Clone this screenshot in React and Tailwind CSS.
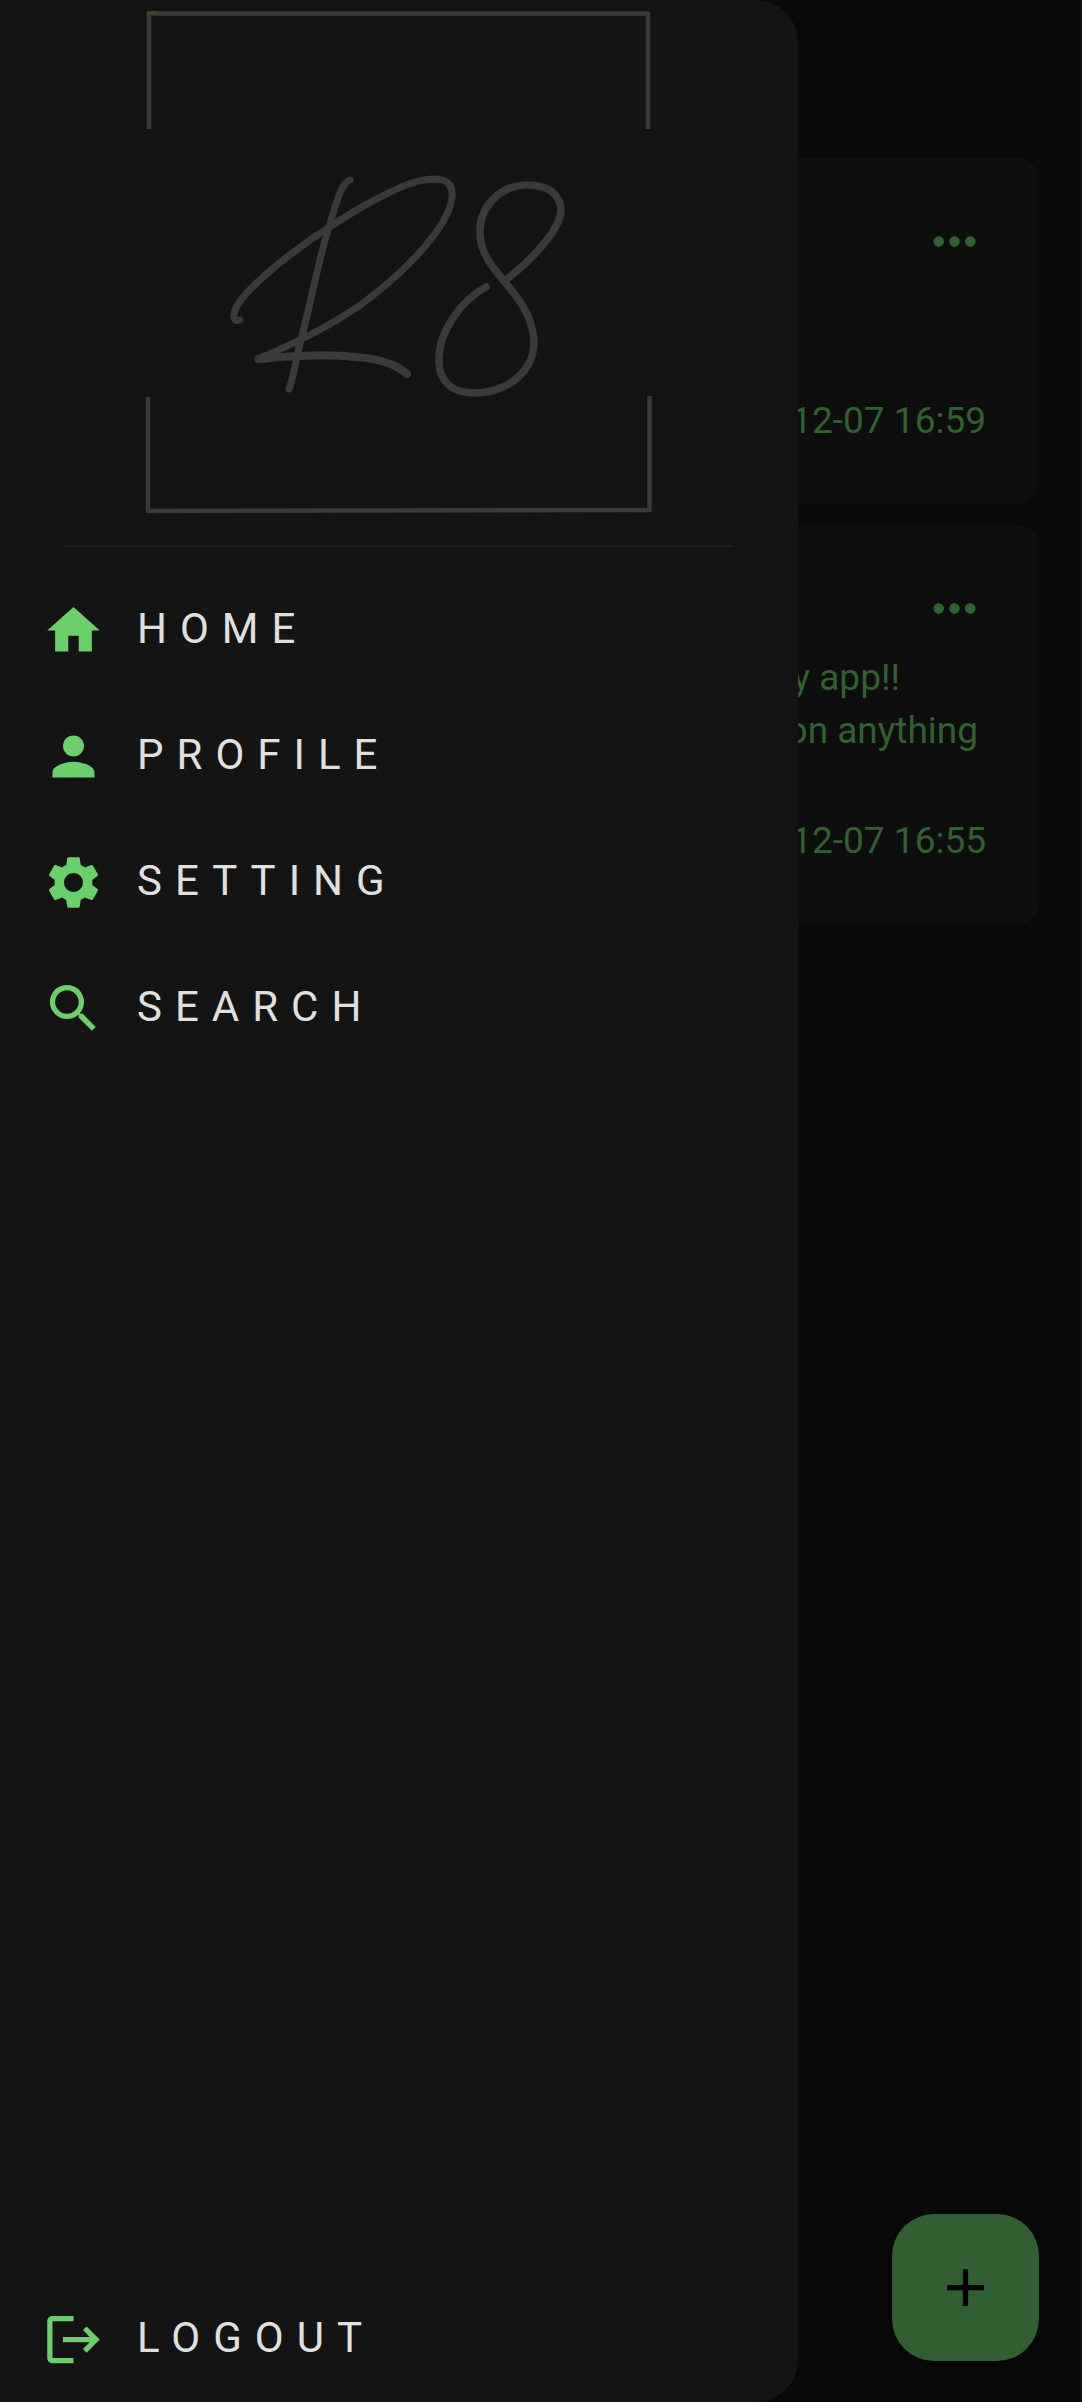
import React from "react";
import { MdHome, MdPerson, MdSettings, MdSearch, MdMoreHoriz, MdAdd } from "react-icons/md";

function LogoutIcon({ className }) {
  return (
    <svg viewBox="0 0 24 24" fill="currentColor" className={className} aria-hidden="true">
      <path d="M17 7l-1.41 1.41L18.17 11H8v2h10.17l-2.58 2.58L17 17l5-5zM4 5h8V3H4c-1.1 0-2 .9-2 2v14c0 1.1.9 2 2 2h8v-2H4V5z" />
    </svg>
  );
}

function Logo() {
  return (
    <svg
      viewBox="126 0 546 545"
      className="mx-auto w-[546px] h-[545px] shrink-0"
      fill="none"
      stroke="#3c3a39"
      strokeLinecap="round"
      strokeLinejoin="round"
      role="img"
      aria-label="Signature logo"
    >
      <g strokeWidth="4.5" strokeLinecap="butt">
        <path d="M149 129V13.5H648V129" />
        <path d="M148 397V511L649.5 510V396" />
      </g>
      <path d="M148 13L156 12.5" stroke="#4a4322" strokeWidth="3" />
      <path
        strokeWidth="7"
        d="M350 180C340 183 334 212 328 230C318 262 309 312 299 347C296 362 293 378 289 389"
      />
      <path
        strokeWidth="7"
        d="M240 320C234 322 232 317 236 308C242 296 255 284 271 270C290 254 308 241 328 228C344 218 357 209 371 202C388 193 399 187 412 183C420 180 428 179 437 179C448 180 453 186 452 197C450 222 416 262 371 297C341 321 300 341 258 359"
      />
      <path
        strokeWidth="8"
        d="M259 359C275 358 285 356 300 356C319 355 337 355 354 357C375 358 395 363 407 374"
      />
      <path
        strokeWidth="7.5"
        d="M486 287C463 299 439 330 439 359C438 380 451 393 474 393C487 393 500 389 509 384C526 373 534 360 534 341C533 313 514 293 495 270C487 260 480 248 480 233C479 207 500 185 528 185C549 185 561 195 561 211C560 229 534 258 507 279"
      />
    </svg>
  );
}

const links = [
  { label: "HOME", Icon: MdHome },
  { label: "PROFILE", Icon: MdPerson },
  { label: "SETTING", Icon: MdSettings },
  { label: "SEARCH", Icon: MdSearch },
];

function DrawerLink({ label, Icon }) {
  return (
    <a href="#" className="flex items-start gap-[32px] text-[#e0e0e0]">
      <Icon className="size-[63px] shrink-0 text-[#6bd06b]" />
      <span className="text-[42px] leading-[60px] tracking-[13px]">{label}</span>
    </a>
  );
}

function Post({ lines, date }) {
  return (
    <article className="flex flex-col items-end rounded-[21px] bg-[#0e0e0e] px-[53px] pt-[52px] pb-[57px]">
      <button type="button" aria-label="Post options">
        <MdMoreHoriz className="size-[63px]" />
      </button>
      <div className="flex flex-col items-end pt-[11px] pb-[57px]">
        {lines}
      </div>
      <time>{date}</time>
    </article>
  );
}

export default function App() {
  return (
    <div className="relative flex min-h-screen flex-col border-r-2 border-[#101010] bg-[#090909] font-['Roboto',sans-serif]">
      <main className="flex flex-1 flex-col gap-[21px] px-[41px] pt-[158px] text-[37px] leading-[53px] text-[#316031]">
        <Post lines={<p className="h-[53px]" />} date="12-07 16:59" />
        <Post
          lines={
            <>
              <p className="pr-[86px]">my app!!</p>
              <p className="pr-[8px]">on anything</p>
            </>
          }
          date="12-07 16:55"
        />
        <button
          type="button"
          aria-label="Add post"
          className="mt-auto mb-[41px] flex size-[147px] items-center justify-center self-end rounded-[42px] bg-[#315f31] text-black shadow-lg"
        >
          <MdAdd className="size-[63px]" />
        </button>
      </main>

      <aside className="absolute inset-y-0 left-0 flex w-[798px] max-w-full flex-col rounded-r-[42px] bg-[#141414] pb-[31px]">
        <Logo />
        <hr className="mx-[65px] border-t-2 border-[#1e1e1e]" />
        <nav aria-label="Main" className="flex flex-col gap-[63px] px-[42px] pt-[52px]">
          {links.map((link) => (
            <DrawerLink key={link.label} {...link} />
          ))}
        </nav>
        <div className="mt-auto px-[42px]">
          <DrawerLink label="LOGOUT" Icon={LogoutIcon} />
        </div>
      </aside>
    </div>
  );
}
